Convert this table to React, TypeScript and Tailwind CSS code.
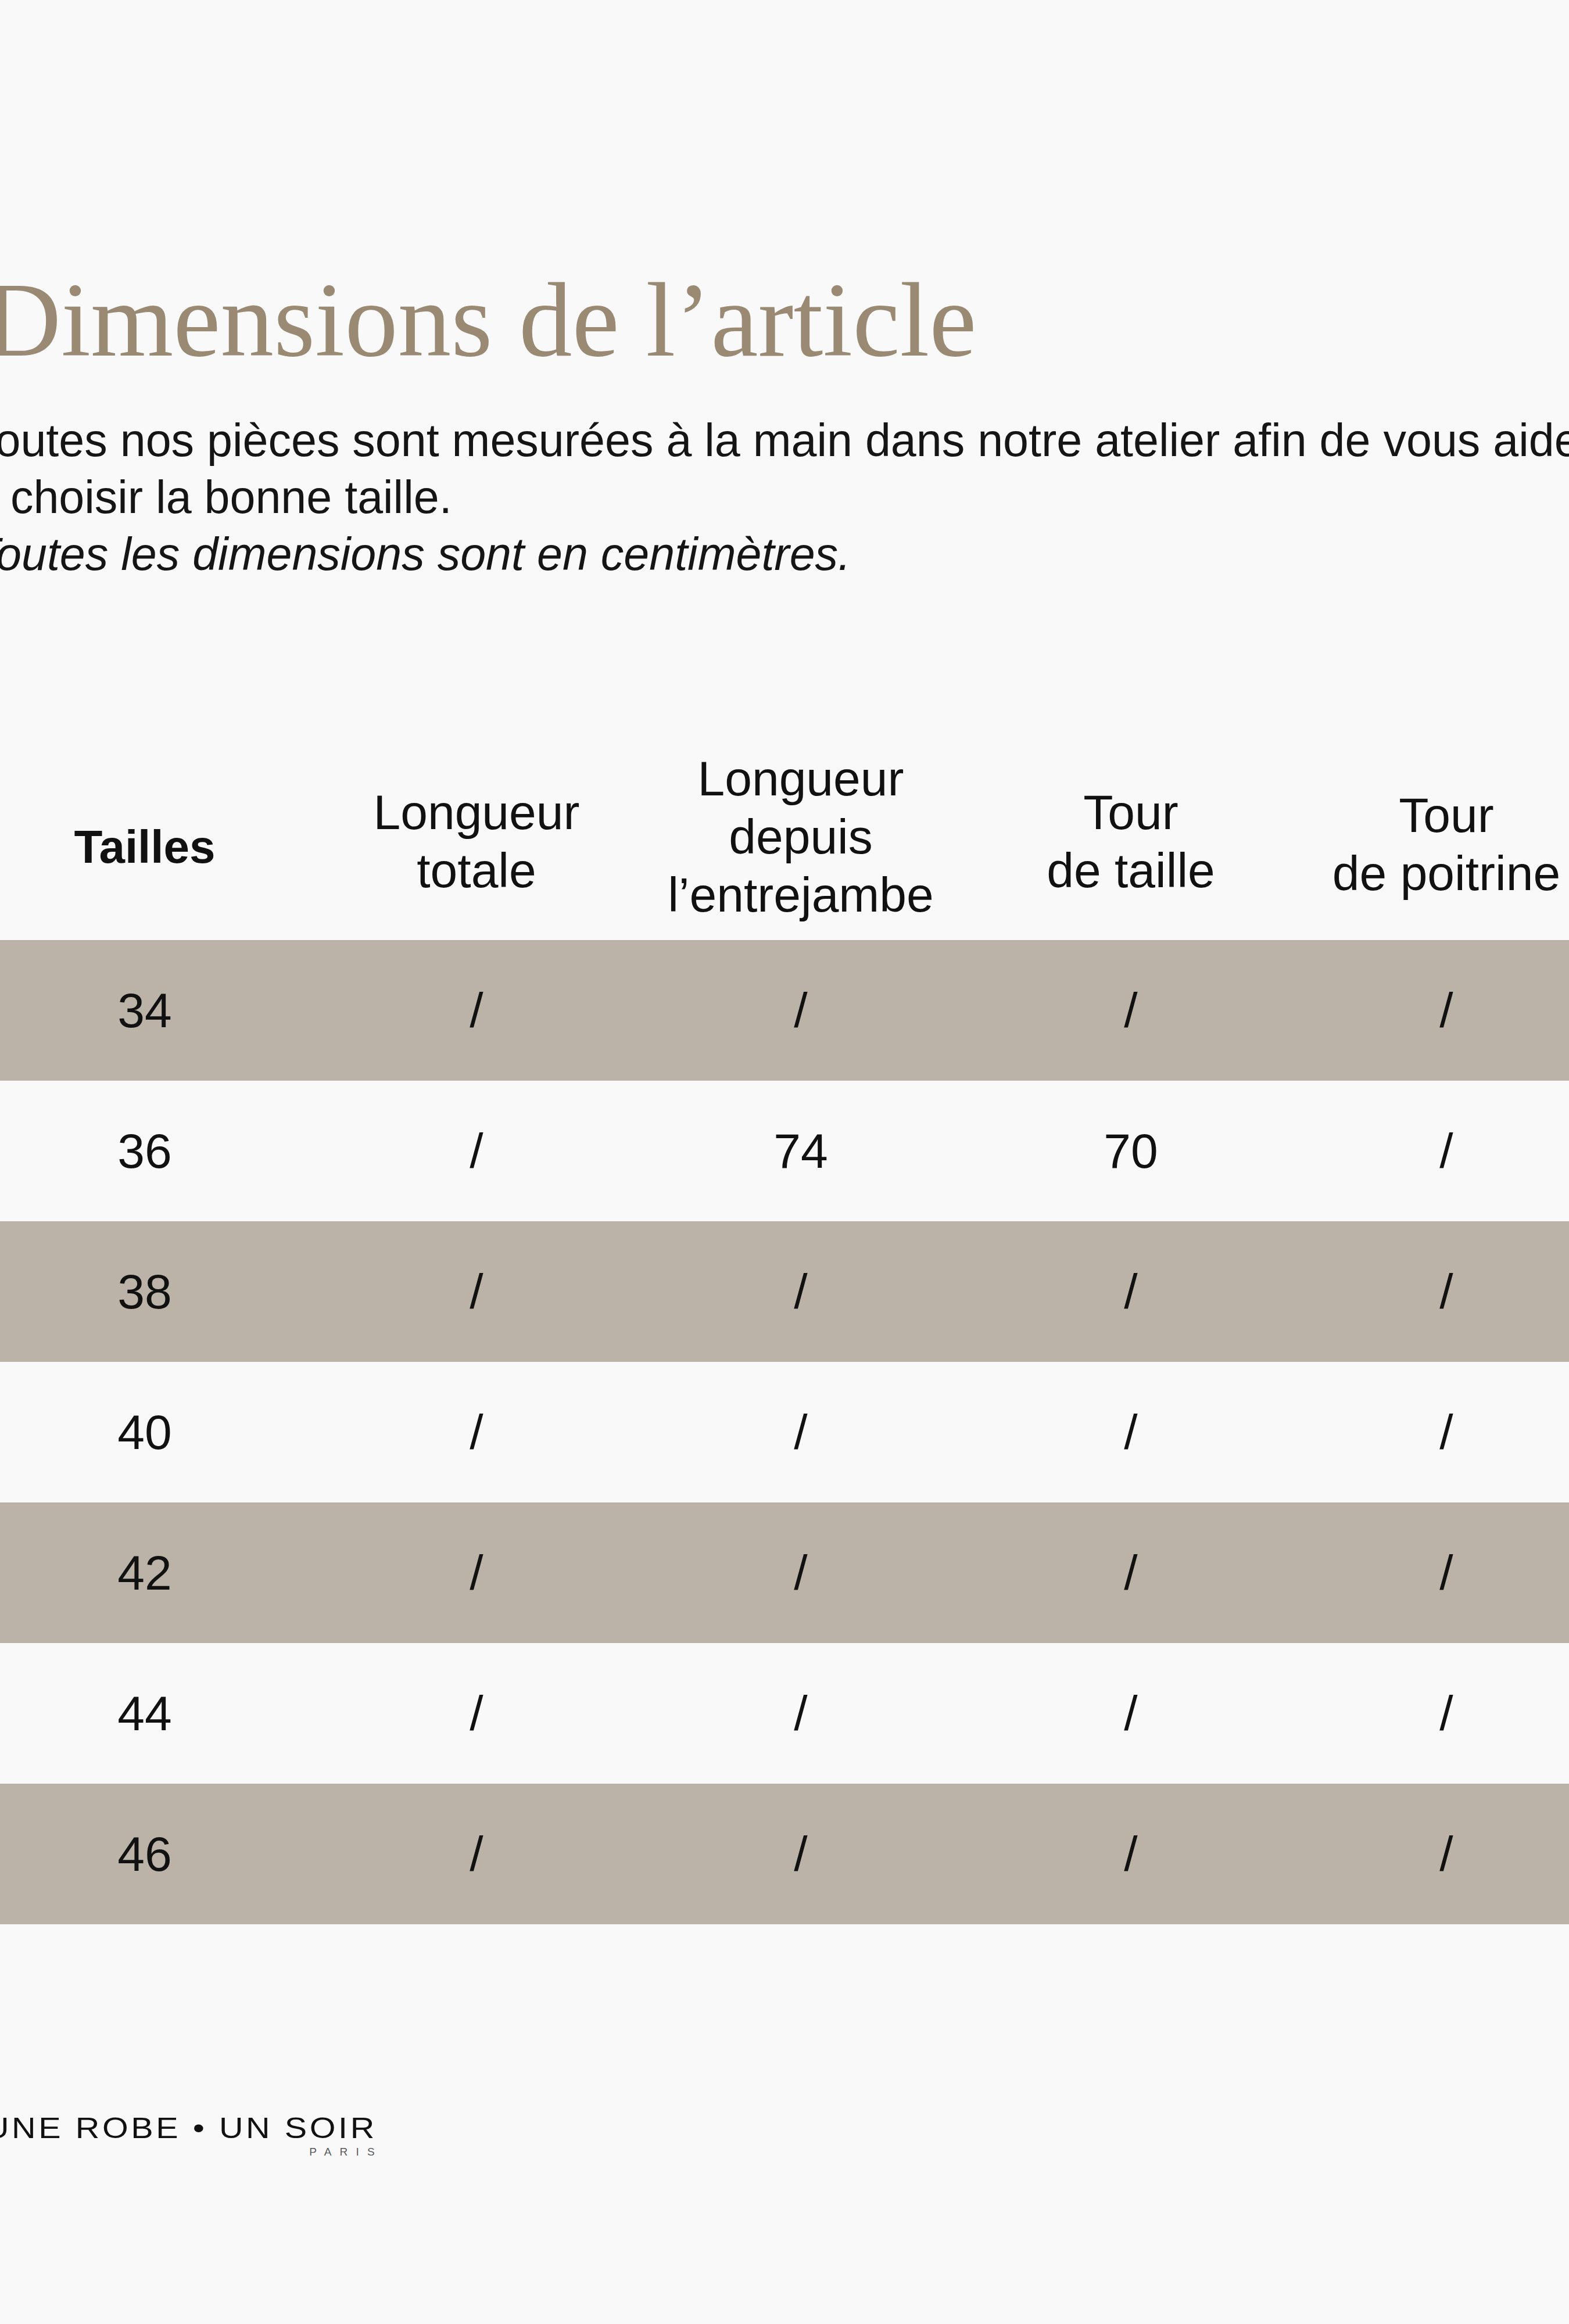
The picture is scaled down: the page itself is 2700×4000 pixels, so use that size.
import React from "react";

const sizes = [
  { taille: "34", longueur: "/", entrejambe: "/", tourTaille: "/", poitrine: "/" },
  { taille: "36", longueur: "/", entrejambe: "74", tourTaille: "70", poitrine: "/" },
  { taille: "38", longueur: "/", entrejambe: "/", tourTaille: "/", poitrine: "/" },
  { taille: "40", longueur: "/", entrejambe: "/", tourTaille: "/", poitrine: "/" },
  { taille: "42", longueur: "/", entrejambe: "/", tourTaille: "/", poitrine: "/" },
  { taille: "44", longueur: "/", entrejambe: "/", tourTaille: "/", poitrine: "/" },
  { taille: "46", longueur: "/", entrejambe: "/", tourTaille: "/", poitrine: "/" },
];

const grid = "grid grid-cols-[568px_574px_542px_594px_492px]";

const App = () => {
  return (
    <div className="flex min-h-screen justify-center overflow-hidden bg-[#f9f9f9] text-[#111111] [font-family:'Liberation_Sans',Arial,sans-serif]">
      <div className="w-[2770px] shrink-0 pt-[459px]">
        {/* Titre */}
        <h1 className="ml-[8px] text-[183px] leading-[183px] font-normal text-[#9a8a74] [font-family:'Liberation_Serif','Times_New_Roman',serif]">
          Dimensions de l’article
        </h1>

        {/* Intro */}
        <div className="-ml-[13px] mt-[67px] whitespace-nowrap text-[79px] leading-[98px] text-[#151515]">
          <p>
            Toutes nos pièces sont mesurées à la main dans notre atelier afin de vous aider
            <br />
            à choisir la bonne taille.
          </p>
          <p className="italic">Toutes les dimensions sont en centimètres.</p>
        </div>

        {/* Tableau des tailles */}
        <div className="mt-[275px] text-[84px] leading-[100px]">
          <div className={`${grid} h-[340px] items-center text-center`}>
            <div className="pt-[20px] text-[80px] font-bold">Tailles</div>
            <div>
              Longueur
              <br />
              totale
            </div>
            <div className="-mt-[16px]">
              Longueur
              <br />
              depuis
              <br />
              l’entrejambe
            </div>
            <div>
              Tour
              <br />
              de taille
            </div>
            <div className="pt-[10px]">
              Tour
              <br />
              de poitrine
            </div>
          </div>

          {sizes.map((row, i) => (
            <div
              key={row.taille}
              className={`${grid} h-[242px] items-center text-center ${i % 2 === 0 ? "bg-[#bbb3a7]" : ""}`}
            >
              <div>{row.taille}</div>
              <div>{row.longueur}</div>
              <div>{row.entrejambe}</div>
              <div>{row.tourTaille}</div>
              <div>{row.poitrine}</div>
            </div>
          ))}
        </div>

        {/* Logo */}
        <div className="ml-[3px] mt-[326px] flex w-[677px] flex-col items-end">
          <div className="-mr-[4px] origin-right scale-x-[1.15] text-[50px] leading-[50px] tracking-[4px] whitespace-nowrap text-[#111111]">
            UNE ROBE • UN SOIR
          </div>
          <div className="-mr-[14px] mt-[6px] text-[19px] leading-[19px] tracking-[0.75em] text-[#5a5a5a]">
            PARIS
          </div>
        </div>
      </div>
    </div>
  );
};

export default App;
